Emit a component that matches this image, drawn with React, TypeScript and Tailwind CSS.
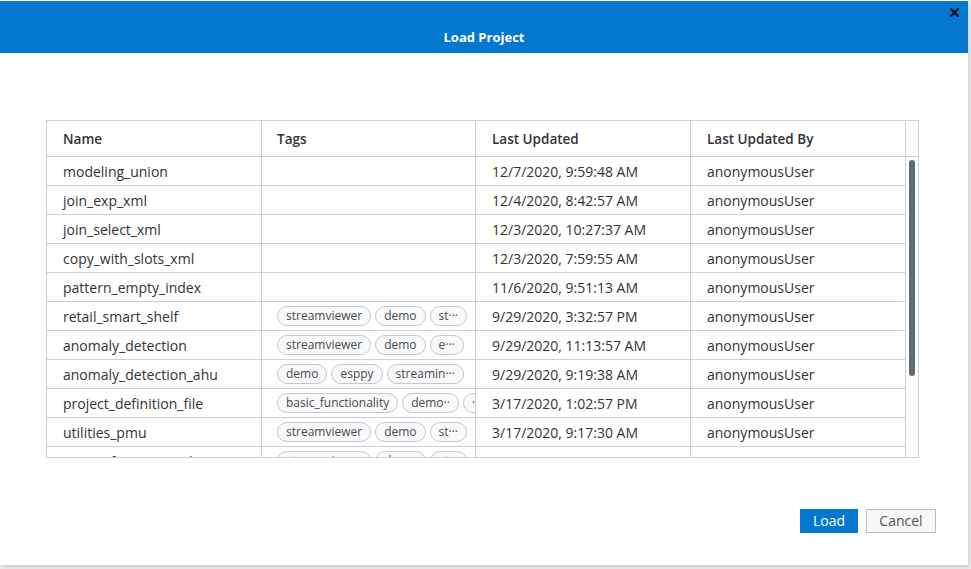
import { ReactNode } from 'react';

type Row = {
  name: string;
  tags: string[];
  updated: string;
  by: string;
};

const rows: Row[] = [
  { name: 'modeling_union', tags: [], updated: '12/7/2020, 9:59:48 AM', by: 'anonymousUser' },
  { name: 'join_exp_xml', tags: [], updated: '12/4/2020, 8:42:57 AM', by: 'anonymousUser' },
  { name: 'join_select_xml', tags: [], updated: '12/3/2020, 10:27:37 AM', by: 'anonymousUser' },
  { name: 'copy_with_slots_xml', tags: [], updated: '12/3/2020, 7:59:55 AM', by: 'anonymousUser' },
  { name: 'pattern_empty_index', tags: [], updated: '11/6/2020, 9:51:13 AM', by: 'anonymousUser' },
  { name: 'retail_smart_shelf', tags: ['streamviewer', 'demo', 'st···'], updated: '9/29/2020, 3:32:57 PM', by: 'anonymousUser' },
  { name: 'anomaly_detection', tags: ['streamviewer', 'demo', 'e···'], updated: '9/29/2020, 11:13:57 AM', by: 'anonymousUser' },
  { name: 'anomaly_detection_ahu', tags: ['demo', 'esppy', 'streamin···'], updated: '9/29/2020, 9:19:38 AM', by: 'anonymousUser' },
  { name: 'project_definition_file', tags: ['basic_functionality', 'demo··', '·'], updated: '3/17/2020, 1:02:57 PM', by: 'anonymousUser' },
  { name: 'utilities_pmu', tags: ['streamviewer', 'demo', 'st···'], updated: '3/17/2020, 9:17:30 AM', by: 'anonymousUser' },
  { name: 'power_forecast_with_streamviewer', tags: ['streamviewer', 'demo', 'st···'], updated: '3/17/2020, 9:17:29 AM', by: 'anonymousUser' },
];

function Cell({ children, className = '' }: { children?: ReactNode; className?: string }) {
  return (
    <div className={`flex items-center overflow-hidden whitespace-nowrap border-r border-[#ccd0d8] ${className}`}>
      {children}
    </div>
  );
}

function Tag({ label }: { label: string }) {
  return (
    <span className="mr-[4px] inline-flex h-[20px] shrink-0 items-center rounded-full border border-[#c3c7cf] bg-[#f8f9fa] px-[8px] text-[12px] leading-none text-[#4a4a4a]">
      {label}
    </span>
  );
}

export default function App() {
  return (
    <div className="h-[569px] w-[971px] overflow-hidden bg-[#ececec] font-['Open_Sans',sans-serif]">
      <div className="relative flex h-[565px] w-[968px] flex-col border-t border-white bg-white shadow-[1px_2px_3px_rgba(0,0,0,0.12)]">
        <div className="relative h-[52px] shrink-0 bg-[#0477cf] pt-[23px] text-center">
          <span className="text-[13px] font-bold leading-[20px] text-white">Load Project</span>
          <button className="absolute right-[9px] top-[6px] flex h-[10px] w-[10px] items-center justify-center">
            <svg width="9" height="9" viewBox="0 0 9 9">
              <path d="M1 1 L8 8 M8 1 L1 8" stroke="#111" strokeWidth="2.2" strokeLinecap="square" />
            </svg>
          </button>
        </div>

        <div className="ml-[46px] mt-[67px] w-[873px] border border-[#ccd0d8] text-[14px] text-[#333]">
          <div className="grid h-[36px] grid-cols-[215px_214px_215px_215px_12px] border-b border-[#ccd0d8] text-[13.5px] font-semibold">
            <Cell className="pl-[16px] pt-[1px]">Name</Cell>
            <Cell className="pl-[15px] pt-[1px]">Tags</Cell>
            <Cell className="pl-[16px] pt-[1px]">Last Updated</Cell>
            <Cell className="pl-[16px] pt-[1px]">Last Updated By</Cell>
            <div />
          </div>
          <div className="flex h-[300px] overflow-hidden">
            <div className="w-[859px] shrink-0">
              {rows.map((r) => (
                <div
                  key={r.name}
                  className="grid h-[29px] grid-cols-[215px_214px_215px_215px] border-b border-[#ccd0d8]"
                >
                  <Cell className="pl-[16px]">{r.name}</Cell>
                  <Cell className="pl-[15px]">
                    {r.tags.map((t, i) => (
                      <Tag key={i} label={t} />
                    ))}
                  </Cell>
                  <Cell className="pl-[16px]">{r.updated}</Cell>
                  <Cell className="pl-[16px]">{r.by}</Cell>
                </div>
              ))}
            </div>
            <div className="flex w-[12px] shrink-0 justify-center pt-[3px]">
              <div className="h-[216px] w-[6px] rounded-full bg-[#5f6b7c]" />
            </div>
          </div>
        </div>

        <div className="mt-[51px] flex justify-end gap-[8px] pr-[32px]">
          <button className="h-[24px] w-[58px] bg-[#0477cf] text-[14px] leading-none text-white">Load</button>
          <button className="h-[24px] w-[70px] border border-[#b9bec7] bg-[#f6f7f9] text-[14px] leading-none text-[#555]">
            Cancel
          </button>
        </div>
      </div>
    </div>
  );
}
